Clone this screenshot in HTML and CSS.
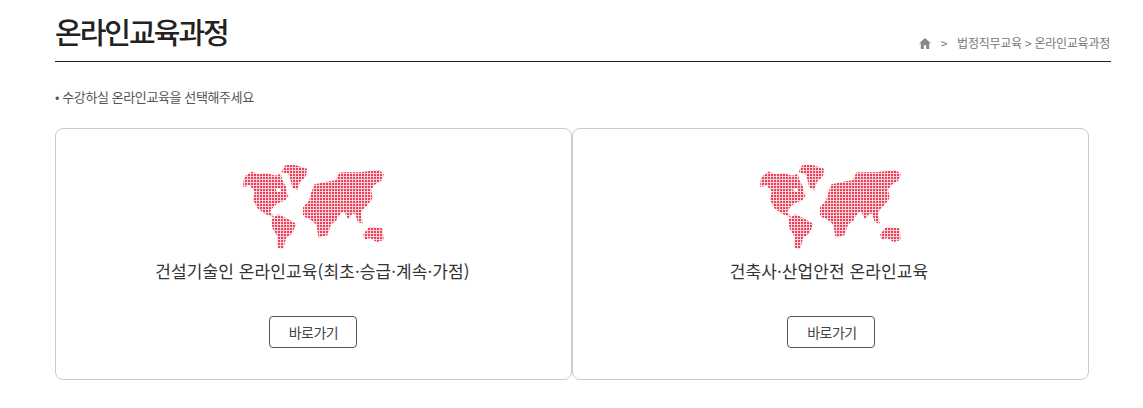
FILE: index.html
```html
<!doctype html>
<html lang="ko">
<head>
    <meta charset="UTF-8" />
    <meta name="viewport" content="width=device-width, initial-scale=1.0" />
    <title>온라인교육과정</title>
    <link rel="stylesheet" href="styles.css">
</head>
<body>

    <svg class="defs" width="0" height="0" aria-hidden="true">
        <defs>
            <pattern id="dots" width="9" height="9" patternUnits="userSpaceOnUse">
                <rect width="9" height="9" fill="#e93f58" />
                <rect x="6" width="3" height="9" fill="#fbd3d9" />
                <rect y="6" width="9" height="3" fill="#fbd3d9" />
            </pattern>
            <symbol id="worldmap" viewBox="0 0 495 300">
                <g class="land" fill="url(#dots)" stroke="url(#dots)" stroke-width="6" stroke-linejoin="round" fill-rule="evenodd">
                    <!-- north america, hudson bay cut out -->
                    <path d="M42 90L45 65L65 50L85 58L110 55L135 62L150 58L155 75L165 92L168 112L172 118L165 130L140 140L125 155L115 170L128 180L105 170L85 155L72 130L78 105L60 85ZM133 98L148 93L160 106L148 112L138 108Z" />
                    <!-- greenland -->
                    <path d="M158 46L168 30L195 30L228 40L225 60L208 75L200 98L190 95L184 70L178 52Z" />
                    <!-- south america -->
                    <path d="M128 190L145 178L170 190L195 205L185 230L165 245L158 275L145 272L145 240L130 215Z" />
                    <!-- eurasia, africa -->
                    <path d="M222 178L222 155L240 135L245 115L255 88L290 80L320 75L330 52L390 52L445 45L458 55L452 72L430 85L420 100L425 125L410 145L395 160L390 175L395 200L385 195L378 170L365 170L355 185L345 165L335 165L325 178L318 172L318 190L300 205L290 235L268 242L262 205L245 190Z" />
                    <!-- australia -->
                    <path d="M403 235L420 215L455 220L458 250L440 255L420 243L405 248Z" />
                </g>
            </symbol>
        </defs>
    </svg>

    <div class="container">
        <div class="page-title">
            <h1>온라인교육과정</h1>
            <div class="location">
                <svg class="home" viewBox="0 0 12 11" width="12" height="11"><path d="M6 0L12 5.5H10.2V11H7.2V7.2H4.8V11H1.8V5.5H0Z" /></svg>
                <span class="sep">&gt;</span>
                <span>법정직무교육 &gt; 온라인교육과정</span>
            </div>
        </div>

        <p class="notice">• 수강하실 온라인교육을 선택해주세요</p>

        <div class="cards">
            <div class="card">
                <svg class="map"><use href="#worldmap" /></svg>
                <h2>건설기술인 온라인교육(최초·승급·계속·가점)</h2>
                <a class="go" href="#">바로가기</a>
            </div>
            <div class="card">
                <svg class="map"><use href="#worldmap" /></svg>
                <h2>건축사·산업안전 온라인교육</h2>
                <a class="go" href="#">바로가기</a>
            </div>
        </div>
    </div>

</body>
</html>
```

FILE: styles.css
```css
body {
    font-family: "Noto Sans CJK KR", "Noto Sans", sans-serif;
    margin: 0;
    background: #fff;
    color: #444;
}
a {
    color: #444;
    text-decoration: none;
}
.defs {
    display: block;
    height: 0;
}
.container {
    width: 1056px;
    margin-left: 55px;
}
.page-title {
    display: flex;
    justify-content: space-between;
    align-items: flex-end;
    height: 61px;
    border-bottom: 1px solid #222;
}
.page-title h1 {
    margin: 0 0 8px;
    font-size: 29px;
    line-height: 44px;
    font-weight: 500;
    letter-spacing: -2px;
    color: #222;
}
.location {
    display: flex;
    align-items: center;
    margin: 0 1px 10px 0;
    font-size: 12px;
    line-height: 16px;
    letter-spacing: -0.25px;
    color: #777;
}
.home {
    fill: #888;
    margin-right: 10px;
}
.sep {
    margin-right: 10px;
}
.notice {
    margin: 26px 0 0;
    font-size: 13px;
    line-height: 18px;
    letter-spacing: -0.4px;
    color: #555;
}
.cards {
    display: flex;
    margin-top: 22px;
}
.card {
    box-sizing: border-box;
    width: 517px;
    height: 252px;
    margin-right: -0.5px;
    border: 1px solid #ccc;
    border-radius: 8px;
    display: flex;
    flex-direction: column;
    align-items: center;
    padding: 27px 2px 0 0;
}
.map {
    width: 165px;
    height: 100px;
    flex: none;
}
.card h2 {
    margin: 2px 0 0;
    font-size: 17px;
    line-height: 26px;
    font-weight: 400;
    letter-spacing: 0.1px;
    color: #333;
}
.go {
    box-sizing: border-box;
    width: 88px;
    height: 32px;
    margin-top: 32px;
    border: 1px solid #555;
    border-radius: 4px;
    font-size: 14px;
    line-height: 30px;
    letter-spacing: -0.5px;
    text-align: center;
    text-indent: 2px;
}
.card + .card .go {
    margin-left: 4px;
}
```
